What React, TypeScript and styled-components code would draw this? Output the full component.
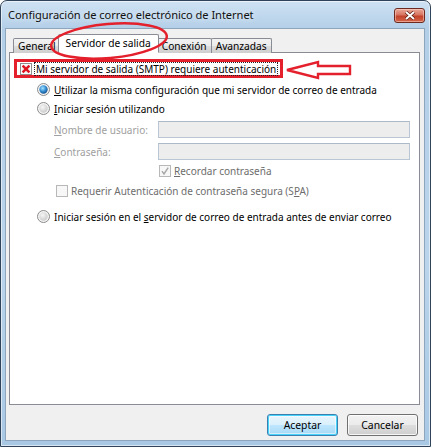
import React from 'react';
import styled, {createGlobalStyle} from 'styled-components';

const GlobalStyle = createGlobalStyle`
    html, body {
        margin: 0;
        padding: 0;
        background: #ffffff;
        overflow: hidden;
    }
    body {
        font-family: "Noto Sans", "DejaVu Sans", sans-serif;
        font-size: 10px;
        color: #000;
    }
`;

const Window = styled.div`
    position: relative;
    box-sizing: border-box;
    width: 431px;
    height: 447px;
    display: flex;
    flex-direction: column;
    padding: 0 5px 5px 4px;
    border: 1px solid #2f4359;
    border-radius: 7px 7px 0 0;
    background: linear-gradient(180deg, #cfe2f3 0%, #b3cfe8 27px, #b9d4eb 60%, #a9c8e4 100%);
    box-shadow: inset 0 0 0 1px rgba(255, 255, 255, 0.55);
`;

const TitleBar = styled.div`
    height: 27px;
    display: flex;
    align-items: flex-start;
    justify-content: space-between;
    padding-left: 3px;
`;

const Title = styled.div`
    margin-top: 6px;
    font-size: 11.1px;
    color: #101010;
    letter-spacing: -0.05px;
    text-shadow: 0 0 6px rgba(255, 255, 255, 0.9);
`;

const CloseButton = styled.div`
    box-sizing: border-box;
    width: 31px;
    height: 15px;
    margin-top: 7px;
    display: flex;
    align-items: center;
    justify-content: center;
    border: 1px solid #6e2a20;
    border-radius: 3px;
    background: linear-gradient(180deg, #eaa898 0%, #d87462 45%, #c2432b 55%, #d5664a 100%);
    box-shadow: inset 0 0 0 1px rgba(255, 220, 210, 0.5);
`;

const Client = styled.div`
    flex: 1;
    display: flex;
    flex-direction: column;
    padding: 5px 4px 0 3px;
    background: #f0f0f0;
    border: 1px solid #8da5bd;
`;

const TabStrip = styled.div`
    display: flex;
    align-items: flex-end;
    height: 19px;
    padding-left: 4px;
    margin-bottom: -1px;
    position: relative;
    z-index: 1;
`;

const Tab = styled.div<{ $active?: boolean }>`
    box-sizing: border-box;
    height: ${p => (p.$active ? 19 : 15)}px;
    padding: ${p => (p.$active ? '2px 7px 0' : '1px 4px 0')};
    margin: ${p => (p.$active ? '0 -2px 0 -2px' : '0 -1px 0 0')};
    position: relative;
    z-index: ${p => (p.$active ? 2 : 1)};
    border: 1px solid #898c95;
    border-bottom: ${p => (p.$active ? '1px solid #ffffff' : 'none')};
    border-radius: 2px 2px 0 0;
    background: ${p => (p.$active ? '#ffffff' : 'linear-gradient(180deg, #f2f2f2 0%, #ebebeb 50%, #dddddd 51%, #cfcfcf 100%)')};
    font-size: 10.2px;
    line-height: 13px;
    white-space: nowrap;
`;

const Panel = styled.div`
    flex: 1;
    display: flex;
    flex-direction: column;
    align-items: flex-start;
    padding: 6px 0 0 4px;
    background: #ffffff;
    border: 1px solid #898c95;
`;

const AnnotatedRow = styled.div`
    box-sizing: border-box;
    height: 19px;
    display: inline-flex;
    align-items: center;
    gap: 3px;
    padding: 0 3px 0 3px;
    border: 3px solid #e3202c;
`;

const FocusLabel = styled.span`
    outline: 1px dotted #222;
    outline-offset: 0;
    line-height: 12px;
    padding: 0 1px;
`;

const OptionRow = styled.div<{ $indent: number; $top?: number; $gap?: number }>`
    height: 19px;
    display: flex;
    align-items: center;
    gap: ${p => p.$gap ?? 4}px;
    margin-left: ${p => p.$indent}px;
    margin-top: ${p => p.$top ?? 0}px;
    white-space: nowrap;
`;

const OptionText = styled.span<{ $muted?: boolean }>`
    color: ${p => (p.$muted ? '#6d6d6d' : '#000')};
`;

const FieldGrid = styled.div`
    align-self: stretch;
    display: grid;
    grid-template-columns: 104px 1fr;
    row-gap: 5px;
    margin: 3px 9px 0 40px;
`;

const FieldLabel = styled.div`
    color: #a0a0a0;
    display: flex;
    align-items: center;
`;

const TextBox = styled.div`
    box-sizing: border-box;
    height: 17px;
    background: #ededed;
    border: 1px solid #bac6d4;
    border-top-color: #abb9c9;
`;

const CheckCell = styled.div`
    grid-column: 2;
    height: 18px;
    display: flex;
    align-items: center;
    gap: 3px;
    margin-left: 1px;
    margin-top: -3px;
`;

const Key = styled.span`
    text-decoration: underline;
    text-underline-offset: 1px;
`;

const ButtonRow = styled.div`
    display: flex;
    justify-content: flex-end;
    gap: 9px;
    padding: 9px 2px 4px 0;
`;

const PushButton = styled.div<{ $primary?: boolean }>`
    box-sizing: border-box;
    width: 71px;
    height: 22px;
    display: flex;
    align-items: center;
    justify-content: center;
    font-size: 10.4px;
    border-radius: 3px;
    border: 1px solid ${p => (p.$primary ? '#3c7fb1' : '#707070')};
    background: ${p => (p.$primary
        ? 'linear-gradient(180deg, #eaf6fd 0%, #d9f0fc 50%, #bee6fd 51%, #a7d9f5 100%)'
        : 'linear-gradient(180deg, #f2f2f2 0%, #ebebeb 50%, #dddddd 51%, #cfcfcf 100%)')};
    box-shadow: ${p => (p.$primary ? 'inset 0 0 0 1px #48d4f8, inset 0 0 0 2px rgba(255,255,255,0.5)' : 'inset 0 0 0 1px rgba(255,255,255,0.8)')};
`;

const Overlay = styled.svg<{ $x: number; $y: number }>`
    position: absolute;
    left: ${p => p.$x}px;
    top: ${p => p.$y}px;
    overflow: visible;
    pointer-events: none;
    z-index: 5;
`;

const Radio: React.FC<{ checked?: boolean }> = ({checked}) => (
    <svg width="13" height="13" viewBox="0 0 13 13">
        <defs>
            <radialGradient id={checked ? 'rbOn' : 'rbOff'} cx="0.4" cy="0.35" r="0.7">
                {checked ? (
                    <>
                        <stop offset="0" stopColor="#a8e4ff"/>
                        <stop offset="0.5" stopColor="#3b94d8"/>
                        <stop offset="1" stopColor="#144d86"/>
                    </>
                ) : (
                    <>
                        <stop offset="0" stopColor="#f6f6f6"/>
                        <stop offset="1" stopColor="#c9c9c9"/>
                    </>
                )}
            </radialGradient>
        </defs>
        <circle cx="6.5" cy="6.5" r="6" fill="#f4f4f4" stroke="#8a8a8a" strokeWidth="1"/>
        <circle cx="6.5" cy="6.5" r="4.2" fill={checked ? 'url(#rbOn)' : 'url(#rbOff)'}/>
    </svg>
);

const CheckBox: React.FC<{ mark?: 'x' | 'tick'; disabled?: boolean }> = ({mark, disabled}) => (
    <svg width="12" height="12" viewBox="0 0 12 12">
        <rect x="0.5" y="0.5" width="11" height="11" fill={disabled ? '#f7f7f7' : '#ffffff'}
              stroke={disabled ? '#b8b8b8' : '#8f8f8f'}/>
        {!disabled && <rect x="2" y="2" width="8" height="8" fill="#e6e6e6" opacity="0.5"/>}
        {mark === 'x' && (
            <path d="M2.6 2.6 L9.4 9.4 M9.4 2.6 L2.6 9.4" stroke="#e0141f" strokeWidth="2.4"/>
        )}
        {mark === 'tick' && (
            <path d="M3 6.2 L5 9 L9.2 2.6" fill="none" stroke="#a6a6a6" strokeWidth="1.4"/>
        )}
    </svg>
);

const App: React.FC = () => {
    return (
        <>
            <GlobalStyle/>
            <Window>
                <TitleBar>
                    <Title>Configuración de correo electrónico de Internet</Title>
                    <CloseButton>
                        <svg width="12" height="9" viewBox="0 0 12 9">
                            <path d="M2 1 L10 8 M10 1 L2 8" stroke="#5a1a10" strokeWidth="3.4"/>
                            <path d="M2 1 L10 8 M10 1 L2 8" stroke="#ffffff" strokeWidth="2"/>
                        </svg>
                    </CloseButton>
                </TitleBar>
                <Client>
                    <TabStrip>
                        <Tab>General</Tab>
                        <Tab $active>Servidor de salida</Tab>
                        <Tab>Conexión</Tab>
                        <Tab>Avanzadas</Tab>
                    </TabStrip>
                    <Panel>
                        <AnnotatedRow>
                            <CheckBox mark="x"/>
                            <FocusLabel>Mi servidor de salida (SMTP) requiere autenticación</FocusLabel>
                        </AnnotatedRow>
                        <OptionRow $indent={23} $top={2}>
                            <Radio checked/>
                            <OptionText><Key>U</Key>tilizar la misma configuración que mi servidor de correo de entrada</OptionText>
                        </OptionRow>
                        <OptionRow $indent={23}>
                            <Radio/>
                            <OptionText><Key>I</Key>niciar sesión utilizando</OptionText>
                        </OptionRow>
                        <FieldGrid>
                            <FieldLabel><span><Key>N</Key>ombre de usuario:</span></FieldLabel>
                            <TextBox/>
                            <FieldLabel><span><Key>C</Key>ontraseña:</span></FieldLabel>
                            <TextBox/>
                            <CheckCell>
                                <CheckBox mark="tick" disabled/>
                                <OptionText $muted><Key>R</Key>ecordar contraseña</OptionText>
                            </CheckCell>
                        </FieldGrid>
                        <OptionRow $indent={42} $top={1} $gap={3}>
                            <CheckBox disabled/>
                            <OptionText $muted>Requerir Autenticación de contraseña segura (S<Key>P</Key>A)</OptionText>
                        </OptionRow>
                        <OptionRow $indent={23} $top={7}>
                            <Radio/>
                            <OptionText>Iniciar sesión en el <Key>s</Key>ervidor de correo de entrada antes de enviar correo</OptionText>
                        </OptionRow>
                    </Panel>
                    <ButtonRow>
                        <PushButton $primary>Aceptar</PushButton>
                        <PushButton>Cancelar</PushButton>
                    </ButtonRow>
                </Client>

                <Overlay $x={47} $y={20} width="122" height="40" viewBox="0 0 122 40">
                    <ellipse cx="61" cy="20" rx="58" ry="17" fill="none" stroke="#e3202c" strokeWidth="2.5"
                             transform="rotate(-5 61 20)"/>
                </Overlay>
                <Overlay $x={284} $y={59} width="68" height="20" viewBox="0 0 68 20">
                    <path d="M2 10 L33 2 L33 6 L65 6 L65 14 L33 14 L33 18 Z" fill="none" stroke="#e3202c"
                          strokeWidth="2.4" strokeLinejoin="miter"/>
                </Overlay>
            </Window>
        </>
    );
};

export default App;
